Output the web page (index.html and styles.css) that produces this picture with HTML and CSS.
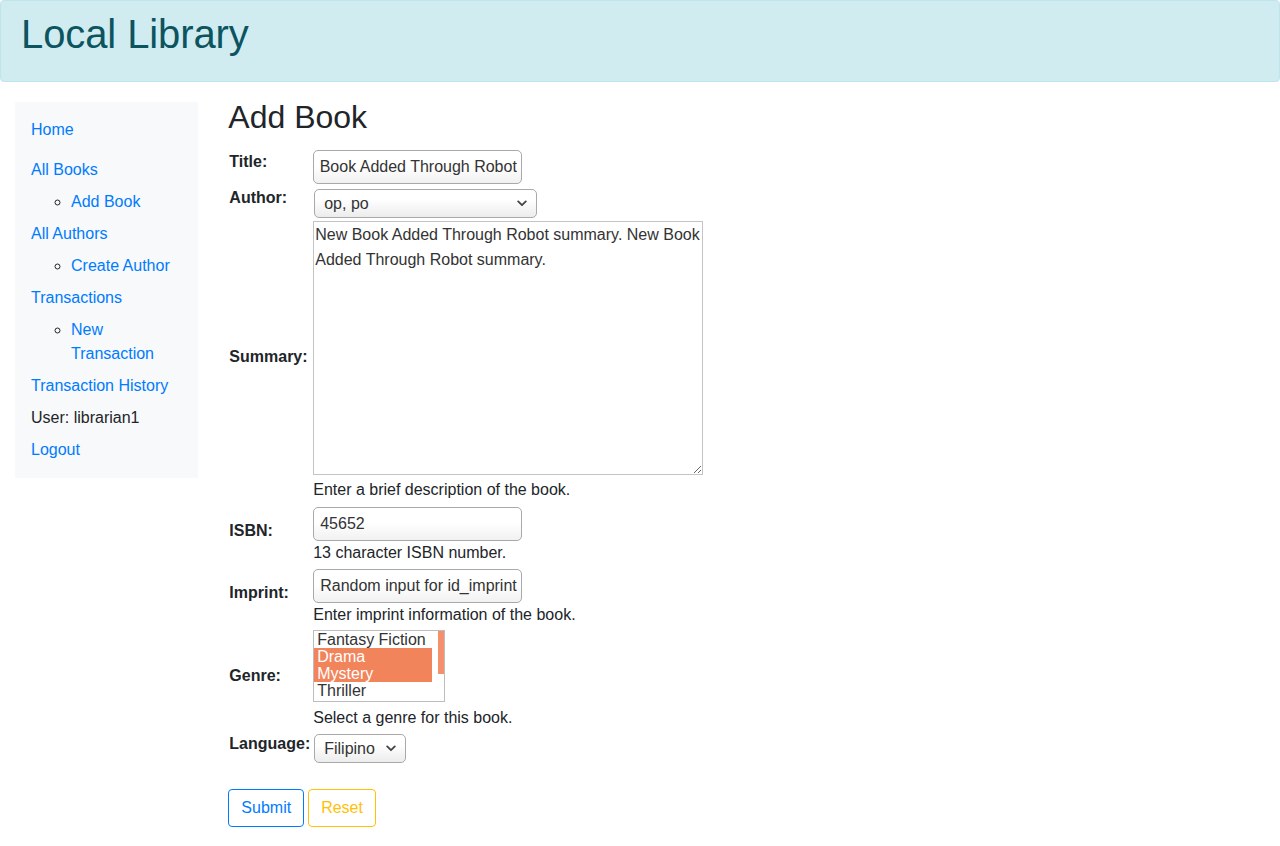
FILE: index.html
```html
<!DOCTYPE html>
<html lang="en">
<head>
<meta charset="utf-8">
<title>Local Library</title>
<link rel="stylesheet" href="styles.css">
</head>
<body>
<header class="site-header">
  <h1 class="site-title">Local Library</h1>
</header>
<div class="layout">
  <nav class="sidebar-col">
    <ul class="sidebar">
      <li class="nav-item nav-home"><a href="#">Home</a></li>
      <li class="nav-item"><a href="#">All Books</a>
        <ul class="sub-list"><li class="nav-item"><a href="#">Add Book</a></li></ul>
      </li>
      <li class="nav-item"><a href="#">All Authors</a>
        <ul class="sub-list"><li class="nav-item"><a href="#">Create Author</a></li></ul>
      </li>
      <li class="nav-item"><a href="#">Transactions</a>
        <ul class="sub-list"><li class="nav-item"><a href="#">New Transaction</a></li></ul>
      </li>
      <li class="nav-item"><a href="#">Transaction History</a></li>
      <li class="nav-item">User: librarian1</li>
      <li class="nav-item"><a href="#">Logout</a></li>
    </ul>
  </nav>
  <main class="main-col">
    <h2 class="page-title">Add Book</h2>
    <form class="book-form" action="#" method="post">
      <table class="form-table">
        <tr class="row-title">
          <th><label for="id_title">Title:</label></th>
          <td><input class="text-input" type="text" id="id_title" value="New Book Added Through Robot"></td>
        </tr>
        <tr class="row-author">
          <th><label for="id_author">Author:</label></th>
          <td>
            <span class="select-wrap">
              <select class="select-input select-author" id="id_author"><option selected>op, po</option></select>
              <svg class="chevron" width="10" height="7" viewBox="0 0 10 7"><path d="M1.2 1.4 L5 5.2 L8.8 1.4" fill="none" stroke="#444" stroke-width="1.8" stroke-linecap="round" stroke-linejoin="round"/></svg>
            </span>
          </td>
        </tr>
        <tr class="row-summary">
          <th><label for="id_summary">Summary:</label></th>
          <td>
            <textarea class="textarea-input" id="id_summary">New Book Added Through Robot summary. New Book Added Through Robot summary.</textarea>
            <span class="helptext help-after-area">Enter a brief description of the book.</span>
          </td>
        </tr>
        <tr class="row-isbn">
          <th><label for="id_isbn">ISBN:</label></th>
          <td>
            <input class="text-input" type="text" id="id_isbn" value="45652">
            <span class="helptext help-after-input">13 character ISBN number.</span>
          </td>
        </tr>
        <tr class="row-imprint">
          <th><label for="id_imprint">Imprint:</label></th>
          <td>
            <input class="text-input" type="text" id="id_imprint" value="Random input for id_imprint">
            <span class="helptext help-after-input">Enter imprint information of the book.</span>
          </td>
        </tr>
        <tr class="row-genre">
          <th><label id="genre-label">Genre:</label></th>
          <td>
            <div class="listbox" role="listbox" aria-multiselectable="true" aria-labelledby="genre-label">
              <div class="listbox-options">
                <div class="listbox-option" role="option" aria-selected="false">Fantasy Fiction</div>
                <div class="listbox-option is-selected" role="option" aria-selected="true">Drama</div>
                <div class="listbox-option is-selected" role="option" aria-selected="true">Mystery</div>
                <div class="listbox-option" role="option" aria-selected="false">Thriller</div>
              </div>
              <div class="listbox-scroll"><div class="listbox-thumb"></div></div>
            </div>
            <span class="helptext help-after-list">Select a genre for this book.</span>
          </td>
        </tr>
        <tr class="row-language">
          <th><label for="id_language">Language:</label></th>
          <td>
            <span class="select-wrap">
              <select class="select-input select-language" id="id_language"><option selected>Filipino</option></select>
              <svg class="chevron" width="10" height="7" viewBox="0 0 10 7"><path d="M1.2 1.4 L5 5.2 L8.8 1.4" fill="none" stroke="#444" stroke-width="1.8" stroke-linecap="round" stroke-linejoin="round"/></svg>
            </span>
          </td>
        </tr>
      </table>
      <div class="form-actions">
        <button type="submit" class="btn btn-primary-outline">Submit</button>
        <button type="reset" class="btn btn-warning-outline">Reset</button>
      </div>
    </form>
  </main>
</div>
<script src="script.js"></script>
</body>
</html>
```

FILE: styles.css
```css
* { box-sizing: border-box; }

html, body {
  margin: 0;
  padding: 0;
}

body {
  font-family: "Liberation Sans", Arial, sans-serif;
  font-size: 16px;
  line-height: 24px;
  color: #212529;
  background: #fff;
}

a {
  color: #007bff;
  text-decoration: none;
}

.site-header {
  background: #d1ecf1;
  border: 1px solid #bee5eb;
  border-radius: 4px;
  color: #0c5460;
  padding: 9px 20px 23px;
  height: 82px;
}

.site-title {
  margin: 0;
  font-size: 40px;
  line-height: 48px;
  font-weight: 400;
  letter-spacing: -0.1px;
}

.layout {
  display: flex;
  margin-top: 16px;
}

.sidebar-col {
  flex: 0 0 16.6667%;
  max-width: 16.6667%;
  padding: 0 15px;
}

.main-col {
  flex: 0 0 83.3333%;
  max-width: 83.3333%;
  padding: 0 15px;
}

.sidebar {
  list-style: none;
  margin: 4px 0 0;
  padding: 16px 16px 16px;
  background: #f8f9fa;
}

.sidebar > .nav-item + .nav-item { margin-top: 8px; }
.sidebar > .nav-home + .nav-item { margin-top: 16px; }

.sub-list {
  list-style: circle;
  margin: 0;
  padding-left: 40px;
}

.sub-list > .nav-item { margin-top: 8px; }

.sub-list > .nav-item::marker { color: #212529; }

.page-title {
  margin: 0 0 9px;
  font-size: 32px;
  line-height: 38.4px;
  font-weight: 400;
}

.form-table {
  border-collapse: collapse;
}

.form-table th {
  text-align: left;
  font-weight: 700;
  vertical-align: middle;
  padding: 0 1px;
  white-space: nowrap;
}

.form-table th label {
  display: inline-block;
  margin-bottom: 6px;
}

.form-table td {
  padding: 5px 1px 0 2px;
  vertical-align: top;
}

.form-table .row-title td { padding-top: 5px; }
.form-table .row-author td { padding-top: 5px; }
.form-table .row-summary td { padding-top: 3px; }
.form-table .row-imprint td { padding-top: 4px; }
.form-table .row-genre td { padding-top: 3px; }
.form-table .row-language td { padding-top: 4px; }

.text-input {
  display: block;
  width: 209px;
  height: 34px;
  margin: 0;
  padding: 0 4px 0 6px;
  font-family: "Liberation Sans", Arial, sans-serif;
  font-size: 16px;
  color: #333;
  border: 1px solid #a9a9a9;
  border-radius: 5px;
  background: linear-gradient(#ffffff 45%, #f1f1f1);
  outline: none;
}

.select-wrap {
  position: relative;
  display: block;
  width: max-content;
  margin-left: 1px;
}

.select-input {
  display: block;
  appearance: none;
  -webkit-appearance: none;
  height: 29px;
  margin: 0;
  padding: 0 28px 0 9px;
  font-family: "Liberation Sans", Arial, sans-serif;
  font-size: 16px;
  color: #333;
  border: 1px solid #a9a9a9;
  border-radius: 5px;
  background: linear-gradient(#ffffff 35%, #ececec);
  outline: none;
}

.select-author { width: 223px; }
.select-language { width: 92px; }

.chevron {
  position: absolute;
  right: 10px;
  top: 11px;
  pointer-events: none;
}

.textarea-input {
  display: block;
  width: 390px;
  height: 254px;
  margin: 0;
  padding: 0 1px;
  font-family: "Liberation Sans", Arial, sans-serif;
  font-size: 16px;
  line-height: 25px;
  color: #333;
  border: 1px solid #c4c4c4;
  border-radius: 0;
  resize: both;
  outline: none;
}

.listbox {
  display: flex;
  width: 132px;
  height: 72px;
  border: 1px solid #bdbdbd;
  background: #fff;
  color: #333;
  overflow: hidden;
}

.listbox-options {
  flex: 1 1 auto;
}

.listbox-option {
  height: 17px;
  line-height: 17px;
  padding: 0 3px;
  white-space: nowrap;
}

.listbox-option.is-selected {
  background: #f2845c;
  color: #fff;
}

.listbox-scroll {
  flex: 0 0 12px;
  display: flex;
  justify-content: flex-end;
}

.listbox-thumb {
  width: 6px;
  height: 43px;
  background: #f4906c;
}

.helptext {
  display: block;
}

.help-after-area { margin-top: 3px; }
.help-after-input { margin-top: 0; }
.help-after-list { margin-top: 4px; }

.form-actions {
  display: flex;
  gap: 4px;
  margin-top: 26px;
}

.btn {
  display: inline-block;
  font-family: "Liberation Sans", Arial, sans-serif;
  font-size: 16px;
  line-height: 24px;
  padding: 6px 12px;
  border: 1px solid;
  border-radius: 4px;
  background: transparent;
  cursor: pointer;
}

.btn-primary-outline {
  color: #007bff;
  border-color: #007bff;
}

.btn-warning-outline {
  color: #ffc107;
  border-color: #ffc107;
}
```

FILE: script.js
```js
var titleInput = document.getElementById('id_title');
if (titleInput) { titleInput.scrollLeft = titleInput.scrollWidth; }
```
